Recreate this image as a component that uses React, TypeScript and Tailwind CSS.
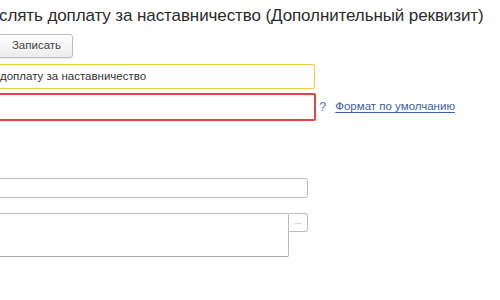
import React from "react";

export default function App() {
  return (
    <div className="w-[500px] h-[300px] bg-white overflow-hidden relative" style={{ fontFamily: '"Liberation Sans", Arial, sans-serif' }}>
      <div className="ml-[-10px] flex flex-col items-start">
        <div className="mt-[5px] ml-[9px] text-[17px] tracking-[-0.1px] leading-[21px] text-[#2b2b2b] whitespace-nowrap">
          слять доплату за наставничество (Дополнительный реквизит)
        </div>
        <button className="mt-[8px] h-[24px] w-[83px] pl-[10px] rounded-[3px] border border-[#bdbdbd] bg-gradient-to-b from-white to-[#ececec] text-[11.5px] text-[#444] flex items-center justify-center shadow-[0_1px_1px_rgba(0,0,0,0.08)]">
          Записать
        </button>
        <div className="mt-[6px] h-[25px] w-[325px] border border-[#f0c93a] rounded-[2px] flex items-center pl-[9px] text-[11.5px] text-[#333]">
          доплату за наставничество
        </div>
        <div className="mt-[4px] flex items-center">
          <div className="h-[28px] w-[326px] border-2 border-[#e24545] rounded-[2px] bg-white" />
          <span className="ml-[3px] text-[13px] text-[#4f7fc1]">?</span>
          <a className="ml-[9px] text-[11.5px] text-[#3a5ea5] underline underline-offset-2 cursor-pointer">Формат по умолчанию</a>
        </div>
        <div className="mt-[57px] h-[20px] w-[318px] border border-[#bcbcbc] rounded-[3px] bg-white" />
        <div className="mt-[15px] flex items-start">
          <div className="h-[44px] w-[299px] border border-[#bcbcbc] border-b-[#a8a8a8] rounded-r-[2px] bg-white" />
          <div className="h-[19px] w-[19px] border border-l-0 border-[#bcbcbc] rounded-r-[3px] bg-white flex items-center justify-center text-[8px] text-[#777] leading-none pb-[2px]">
            ...
          </div>
        </div>
      </div>
    </div>
  );
}
